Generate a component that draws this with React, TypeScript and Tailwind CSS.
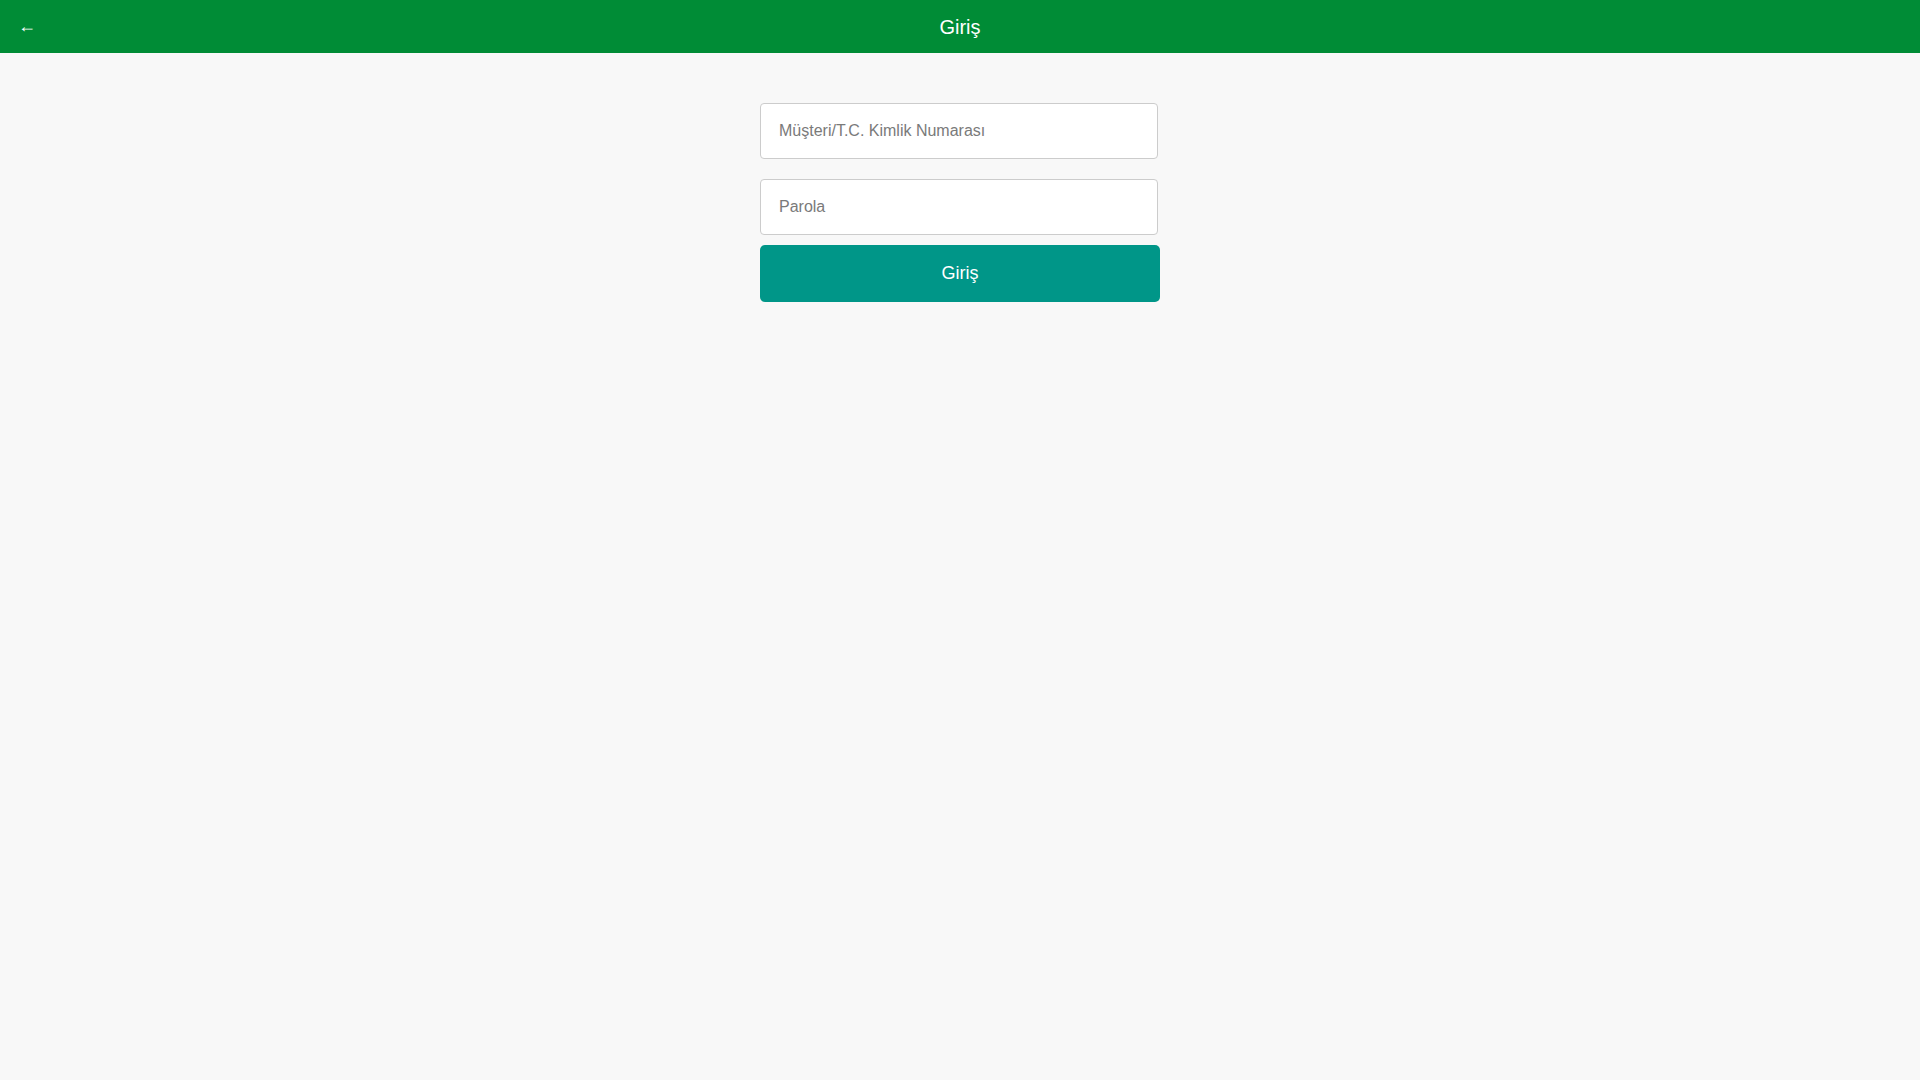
import React, { useState } from 'react';

export default function App() {
  const [customerId, setCustomerId] = useState('');
  const [password, setPassword] = useState('');

  return (
    <div className="min-h-screen bg-[#f8f8f8] font-['Liberation_Sans',Arial,sans-serif]">
      <header className="relative flex h-[53px] items-center justify-center bg-[#008c36] text-white">
        <button className="absolute left-[18px] top-[17px] text-[18px] leading-none">
          ←
        </button>
        <h1 className="text-[20px] font-normal leading-none">Giriş</h1>
      </header>

      <main className="flex justify-center pt-[50px]">
        <form className="flex w-[400px] flex-col" onSubmit={(e) => e.preventDefault()}>
          <input
            type="text"
            value={customerId}
            onChange={(e) => setCustomerId(e.target.value)}
            placeholder="Müşteri/T.C. Kimlik Numarası"
            className="h-[56px] w-[398px] rounded-[4px] border border-[#cccccc] bg-white px-[18px] text-[16px] text-[#333] placeholder:text-[#7a7a7a] outline-none"
          />
          <input
            type="password"
            value={password}
            onChange={(e) => setPassword(e.target.value)}
            placeholder="Parola"
            className="mt-[20px] h-[56px] w-[398px] rounded-[4px] border border-[#cccccc] bg-white px-[18px] text-[16px] text-[#333] placeholder:text-[#7a7a7a] outline-none"
          />
          <button
            type="submit"
            className="mt-[10px] h-[57px] w-[400px] rounded-[5px] bg-[#009688] text-[18px] text-white"
          >
            Giriş
          </button>
        </form>
      </main>
    </div>
  );
}
